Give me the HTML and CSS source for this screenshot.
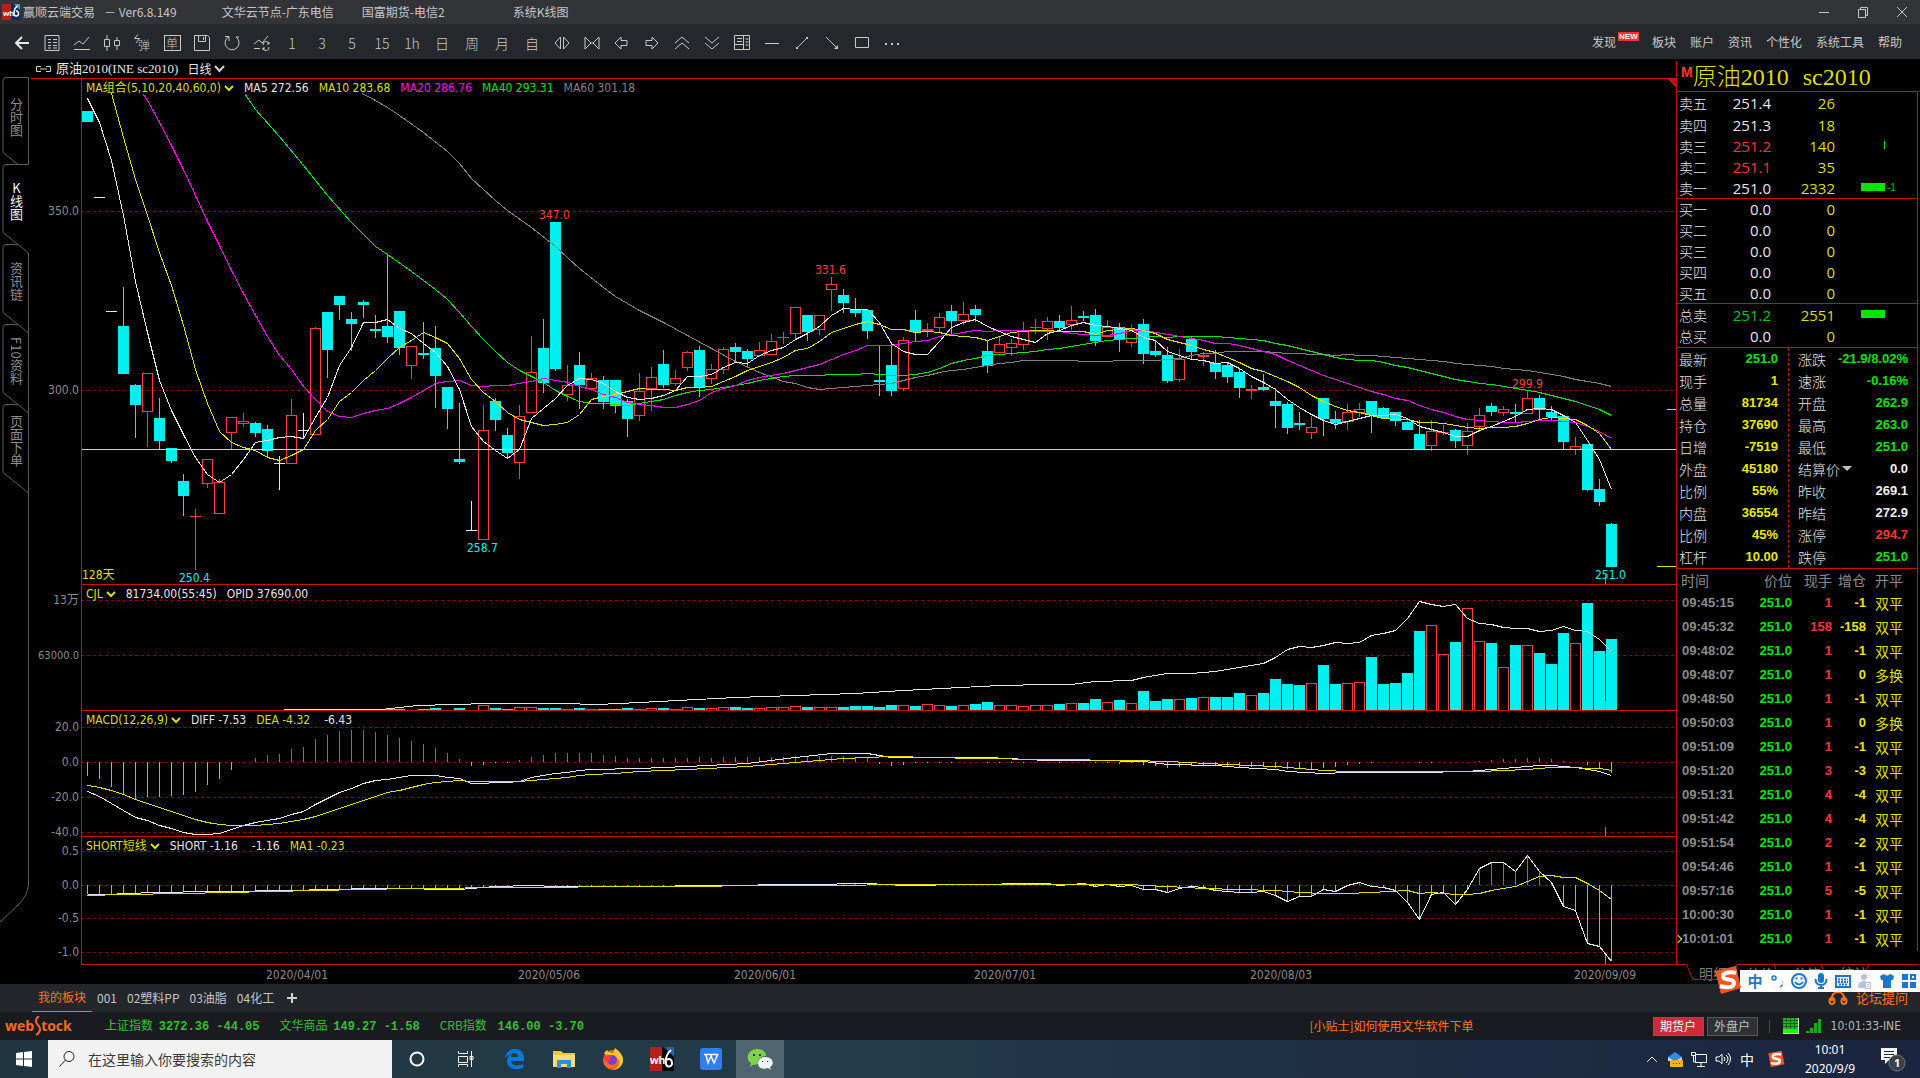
FILE: index.html
```html
<!DOCTYPE html>
<html lang="zh-CN">
<head>
<meta charset="utf-8">
<title>赢顺云端交易 - Ver6.8.149</title>
<link rel="stylesheet" href="styles.css">
</head>
<body>
<header class="titlebar">
  <svg class="app-logo" width="18" height="16" viewBox="0 0 18 16"><rect width="9" height="16" fill="#b3201d"/><rect x="9" width="9" height="16" fill="#0d2c63"/><path d="M12 0h6v6z" fill="#3d9be0"/><text x="1" y="12" class="logo-wh">wh</text><path d="M16 2c-3 1-4 5-4 8a2.300 2.500 0 1 0 2-3" fill="none" stroke="#fff" stroke-width="1.500"/></svg>
  <span class="t-name">赢顺云端交易</span><span class="t-ver">－ Ver6.8.149</span>
  <span class="t-node">文华云节点-广东电信</span><span class="t-broker">国富期货-电信2</span><span class="t-view">系统K线图</span>
  <div class="win-controls">
    <button aria-label="最小化"><svg width="12" height="12"><path d="M1 6.500h10"/></svg></button>
    <button aria-label="还原"><svg width="12" height="12"><path d="M1.500 3.500h7v8h-7zM3.500 3V1.500h7v8H9"/></svg></button>
    <button aria-label="关闭"><svg width="12" height="12"><path d="M1 1l10 10M11 1L1 11"/></svg></button>
  </div>
</header>

<nav class="toolbar">
  <div class="tools">
    <button aria-label="返回"><svg width="16" height="16"><path d="M2 8h13M8 2L2 8l6 6" class="bold"/></svg></button>
    <button aria-label="列表"><svg width="16" height="16"><path d="M1 .5h14v15H1zM4 4.500h3M9 4.500h4M4 7.500h3M9 7.500h4M4 10.500h3M9 10.500h4M4 13h3M9 13h4"/></svg></button>
    <button aria-label="分时"><svg width="18" height="16"><path d="M1 10l5-4 4 3 6-7M1 14.500h16"/></svg></button>
    <button aria-label="K线"><svg width="18" height="16"><path d="M1.500 4.500h5v7h-5zM4 0v4M4 12v4M11.500 5.500h5v5h-5zM14 2v3M14 11v4"/></svg></button>
    <button class="flash"><svg width="8" height="10"><path d="M5 .5L1.500 4.500h5L3 9"/></svg>弹</button>
    <button class="boxed"><span>单</span></button>
    <button aria-label="保存"><svg width="17" height="16"><path d="M.5.500h13l2 2v13H.5zM4.500.500v6h7v-6M9.500 2v3"/></svg></button>
    <button aria-label="刷新"><svg width="17" height="16"><path d="M5 1.500A7 7 0 1 0 12 2M5 6V1.500H1M12 2h3"/></svg></button>
    <button aria-label="切换"><svg width="18" height="16"><path d="M1 9l5-4 3 3 6-7M1 13.500h6M10 10a3 3 0 0 1 6-1M16 12a3 3 0 0 1-6 1M16 7v2h-2M10 15v-2h2"/></svg></button>
    <button>1</button><button>3</button><button>5</button><button>15</button><button>1h</button>
    <button>日</button><button>周</button><button>月</button><button>自</button>
    <button aria-label="放宽"><svg width="16" height="14"><path d="M6.500 1v12L1 7zM9.500 1v12L15 7z"/></svg></button>
    <button aria-label="缩窄"><svg width="16" height="14"><path d="M1 1v12l6-6zM15 1v12L9 7zM7 7h2"/></svg></button>
    <button aria-label="左移"><svg width="16" height="14"><path d="M7 1L1 7l6 6V9.500h6v-5H7z"/></svg></button>
    <button aria-label="右移"><svg width="16" height="14"><path d="M8 1l6 6-6 6V9.500H2v-5h6z"/></svg></button>
    <button aria-label="放大"><svg width="16" height="14"><path d="M1 7l7-6 7 6M1 13l7-6 7 6"/></svg></button>
    <button aria-label="缩小"><svg width="16" height="14"><path d="M1 1l7 6 7-6M1 7l7 6 7-6"/></svg></button>
    <button aria-label="盘口"><svg width="16" height="16"><path d="M.5.500h15v14H.5zM9.500.500v14M.5 9.500h9M3 3.500h5M3 6.500h5M11.500 4h3M11.500 7h3M11.500 10h3"/></svg></button>
    <button aria-label="水平线"><svg width="16" height="14"><path d="M1 7.500h14"/></svg></button>
    <button aria-label="线段"><svg width="14" height="14"><path d="M2 12L12 2"/><path d="M1 11h2v2H1zM11 1h2v2h-2z" class="fill"/></svg></button>
    <button aria-label="箭头"><svg width="14" height="14"><path d="M1 1l11 11"/><path d="M13 9v4H9z" class="fill"/></svg></button>
    <button aria-label="矩形"><svg width="14" height="12"><path d="M.5.500h13v10H.5z"/></svg></button>
    <button aria-label="更多"><svg width="16" height="12"><path d="M1 6h2v2H1zM7 6h2v2H7zM13 6h2v2h-2z" class="fill"/></svg></button>
  </div>
  <div class="menus">
    <a href="#">发现<b class="new">NEW</b></a><a href="#" class="after-new">板块</a><a href="#">账户</a><a href="#">资讯</a><a href="#">个性化</a><a href="#">系统工具</a><a href="#">帮助</a>
  </div>
</nav>

<main class="workspace">
  <aside class="rail">
    <svg class="rail-lines" width="29" height="870">
      <path d="M28.500 18.500H6q-3 0-3 3v72l15 12h10.500zM28.500 105.500H6q-3 0-3 3v65l25.500 20.500M18 185.500H6q-3 0-3 3v65l25.500 20.500M18 265.500H6q-3 0-3 3v65l25.500 20.500M18 345.500H6q-3 0-3 3v65l25.500 20.500M28.500 194v632q-1 11-10.500 20L0 863"/>
    </svg>
    <button class="first">分时图</button>
    <button class="active">K线图</button>
    <button>资讯链</button>
    <button>F10资料</button>
    <button>页面下单</button>
  </aside>

  <section class="charts">
    <div class="chart-head">
      <svg width="17" height="8"><path d="M6 1.500H1.500v5H6M11 1.500h4.500v5H11M5 4h7"/></svg>
      <span class="contract">原油2010(INE sc2010)</span>
      <button class="period">日线<svg width="11" height="8"><path d="M1 1l4.500 5L10 1"/></svg></button>
    </div>
    <div class="pane pane-main">
      <svg id="main"></svg>
      <div class="legend"><button class="yellow">MA组合(5,10,20,40,60,0)<svg width="10" height="7"><path d="M1 1l4 4 4-4"/></svg></button><span class="white">MA5 272.56</span><span class="yellow">MA10 283.68</span><span class="magenta">MA20 286.76</span><span class="green">MA40 293.31</span><span class="gray">MA60 301.18</span></div>
    </div>
    <div class="pane pane-sub">
      <svg id="vol"></svg>
      <div class="legend"><button class="yellow">CJL<svg width="10" height="7"><path d="M1 1l4 4 4-4"/></svg></button><span class="white">81734.00(55:45)</span><span class="white">OPID 37690.00</span></div>
    </div>
    <div class="pane pane-sub">
      <svg id="macd"></svg>
      <div class="legend"><button class="yellow">MACD(12,26,9)<svg width="10" height="7"><path d="M1 1l4 4 4-4"/></svg></button><span class="white">DIFF -7.53</span><span class="yellow">DEA -4.32</span><span class="white wide">-6.43</span></div>
    </div>
    <div class="pane pane-last">
      <svg id="short"></svg>
      <div class="legend"><button class="yellow">SHORT短线<svg width="10" height="7"><path d="M1 1l4 4 4-4"/></svg></button><span class="white">SHORT -1.16</span><span class="white wide">-1.16</span><span class="yellow">MA1 -0.23</span></div>
    </div>
    <svg id="dates" class="dates"></svg>
  </section>

  <aside class="quote">
    <div class="quote-body">
      <h1><sup>M</sup><span>原油2010</span><span>sc2010</span></h1>
      <table class="book">
        <tbody class="asks">
          <tr><th>卖五</th><td class="white">251.4</td><td>26</td><td class="bar"></td></tr>
          <tr><th>卖四</th><td class="white">251.3</td><td>18</td><td class="bar"></td></tr>
          <tr><th>卖三</th><td class="red">251.2</td><td>140</td><td class="bar"><i class="tick"></i></td></tr>
          <tr><th>卖二</th><td class="red">251.1</td><td>35</td><td class="bar"></td></tr>
          <tr><th>卖一</th><td class="white">251.0</td><td>2332</td><td class="bar"><i></i><small>-1</small></td></tr>
        </tbody>
        <tbody>
          <tr><th>买一</th><td class="white">0.0</td><td>0</td><td class="bar"></td></tr>
          <tr><th>买二</th><td class="white">0.0</td><td>0</td><td class="bar"></td></tr>
          <tr><th>买三</th><td class="white">0.0</td><td>0</td><td class="bar"></td></tr>
          <tr><th>买四</th><td class="white">0.0</td><td>0</td><td class="bar"></td></tr>
          <tr><th>买五</th><td class="white">0.0</td><td>0</td><td class="bar"></td></tr>
        </tbody>
        <tbody class="totals">
          <tr><th>总卖</th><td class="dgreen">251.2</td><td>2551</td><td class="bar"><i></i></td></tr>
          <tr><th>总买</th><td class="white">0.0</td><td>0</td><td class="bar"></td></tr>
        </tbody>
      </table>
      <div class="info">
        <dl>
          <div><dt>最新</dt><dd class="green">251.0</dd></div>
          <div><dt>现手</dt><dd>1</dd></div>
          <div><dt>总量</dt><dd>81734</dd></div>
          <div><dt>持仓</dt><dd>37690</dd></div>
          <div><dt>日增</dt><dd>-7519</dd></div>
          <div><dt>外盘</dt><dd>45180</dd></div>
          <div><dt>比例</dt><dd>55%</dd></div>
          <div><dt>内盘</dt><dd>36554</dd></div>
          <div><dt>比例</dt><dd>45%</dd></div>
          <div><dt>杠杆</dt><dd>10.00</dd></div>
        </dl>
        <dl>
          <div><dt>涨跌</dt><dd class="green">-21.9/8.02%</dd></div>
          <div><dt>速涨</dt><dd class="green">-0.16%</dd></div>
          <div><dt>开盘</dt><dd class="green">262.9</dd></div>
          <div><dt>最高</dt><dd class="green">263.0</dd></div>
          <div><dt>最低</dt><dd class="green">251.0</dd></div>
          <div><dt>结算价<svg width="10" height="5"><path d="M0 0h10L5 5z"/></svg></dt><dd class="white">0.0</dd></div>
          <div><dt>昨收</dt><dd class="white">269.1</dd></div>
          <div><dt>昨结</dt><dd class="white">272.9</dd></div>
          <div><dt>涨停</dt><dd class="red">294.7</dd></div>
          <div><dt>跌停</dt><dd class="green">251.0</dd></div>
        </dl>
      </div>
      <table class="ticks">
        <thead><tr><th>时间</th><th>价位</th><th>现手</th><th>增仓</th><th>开平</th></tr></thead>
        <tbody>
          <tr><td>09:45:15</td><td>251.0</td><td>1</td><td>-1</td><td>双平</td></tr>
          <tr><td>09:45:32</td><td>251.0</td><td>158</td><td>-158</td><td>双平</td></tr>
          <tr><td>09:48:02</td><td>251.0</td><td>1</td><td>-1</td><td>双平</td></tr>
          <tr><td>09:48:07</td><td>251.0</td><td>1</td><td>0</td><td>多换</td></tr>
          <tr><td>09:48:50</td><td>251.0</td><td>1</td><td>-1</td><td>双平</td></tr>
          <tr><td>09:50:03</td><td>251.0</td><td>1</td><td>0</td><td>多换</td></tr>
          <tr><td>09:51:09</td><td>251.0</td><td>1</td><td>-1</td><td>双平</td></tr>
          <tr><td>09:51:20</td><td>251.0</td><td>3</td><td>-3</td><td>双平</td></tr>
          <tr><td>09:51:31</td><td>251.0</td><td>4</td><td>-4</td><td>双平</td></tr>
          <tr><td>09:51:42</td><td>251.0</td><td>4</td><td>-4</td><td>双平</td></tr>
          <tr><td>09:51:54</td><td>251.0</td><td>2</td><td>-2</td><td>双平</td></tr>
          <tr><td>09:54:46</td><td>251.0</td><td>1</td><td>-1</td><td>双平</td></tr>
          <tr><td>09:57:16</td><td>251.0</td><td>5</td><td>-5</td><td>双平</td></tr>
          <tr><td>10:00:30</td><td>251.0</td><td>1</td><td>-1</td><td>双平</td></tr>
          <tr class="latest"><td>10:01:01</td><td>251.0</td><td>1</td><td>-1</td><td>双平</td></tr>
        </tbody>
      </table>
    </div>
    <div class="quote-tabs">
      <svg width="244" height="17"><path d="M0 .5h10.500l6.500 15h38l6-15H242M98 .500l6 15M145 .500l6 15M193 .500l-4 8"/></svg>
      <button>明细</button><button>分价</button><button>分笔</button><button>统计</button>
    </div>
  </aside>
</main>

<nav class="groups">
  <a href="#" class="on">我的板块</a><a href="#">001</a><a href="#">02塑料PP</a><a href="#">03油脂</a><a href="#">04化工</a>
  <button aria-label="添加板块"><svg width="12" height="12"><path d="M6 1v10M1 6h10"/></svg></button>
  <a href="#" class="forum"><svg width="20" height="14"><path d="M4 10C3 4 6 1 10 1s7 3 6 9" /><ellipse cx="4" cy="10" rx="2.500" ry="3"/><ellipse cx="16" cy="10" rx="2.500" ry="3"/></svg>论坛提问</a>
</nav>

<footer class="status">
  <div class="brand">web<svg width="7" height="20" viewBox="0 0 7 20"><path d="M5 0C1 3 1 6 4 9s3 7-2 10" /></svg>tock</div>
  <div class="indices">
    <span>上证指数 <b>3272.36 -44.05</b></span>
    <span>文华商品 <b>149.27 -1.58</b></span>
    <span>CRB指数 <b class="far">146.00 -3.70</b></span>
  </div>
  <a href="#" class="tip">[小贴士]如何使用文华软件下单</a>
  <div class="right">
    <button class="acct hot">期货户</button><button class="acct">外盘户</button>
    <i class="sep"></i>
    <svg class="grid-icon" width="16" height="16"><rect width="16" height="16" fill="#d8f0d8"/><rect width="15" height="15" fill="#22b422"/><path d="M0 2.500h15M0 5.500h15M0 8.500h15M3.500 0v11M7.500 0v11M11.500 0v11" stroke="#0b6a0b"/><rect y="11" width="15" height="4" fill="#10ff10"/></svg>
    <svg width="16" height="16"><path d="M0 13h3v2H0zM4 10h3v5H4zM8 5h3v10H8zM12 1h3v14h-3z" fill="#18a818"/></svg>
    <time>10:01:33-INE</time>
  </div>
</footer>

<footer class="taskbar">
  <button class="start" aria-label="开始"><svg width="16" height="16" viewBox="0 0 16 16"><path d="M0 2l7-1v6.500H0zM8 .9L16 0v7.500H8zM0 8.500h7V15l-7-1zM8 8.500h8V16l-8-1z" fill="#fff"/></svg></button>
  <label class="search"><svg width="18" height="18"><circle cx="11" cy="6.500" r="5"/><path d="M7.500 10L1.500 16.500"/></svg><input type="text" placeholder="在这里输入你要搜索的内容" aria-label="搜索"></label>
  <div class="apps">
    <button aria-label="Cortana"><svg width="18" height="18"><circle cx="9" cy="9" r="6.500" fill="none" stroke="#fff" stroke-width="2"/></svg></button>
    <button aria-label="任务视图"><svg width="18" height="18"><path d="M1.500 1v2.500h9V1M1.500 6.500h9v6h-9zM1.500 17v-2.500h9V17M14.500 1v16M13 6.500h3v3h-3z" fill="none" stroke="#fff"/></svg></button>
    <button aria-label="Edge"><svg width="22" height="22" viewBox="0 0 22 22"><path d="M1 10C2 3 7 1 11 1c6 0 9 4 9 9v3H7c0 4 6 6 12 3v4c-7 3-16 1-16-7 0-4 3-7 6-8-2 1-2 3-2 4h7c0-5-6-6-13 1z" fill="#0a78d7"/></svg></button>
    <button aria-label="资源管理器"><svg width="22" height="20" viewBox="0 0 22 20"><path d="M0 2h8l2 2h12v14H0z" fill="#f5c244"/><path d="M0 6h22v12H0z" fill="#ffdc73"/><path d="M4 11h14v8h-4v-4H8v4H4z" fill="#2f8fdb"/></svg></button>
    <button aria-label="Firefox"><svg width="24" height="24" viewBox="0 0 24 24"><circle cx="12" cy="13" r="10" fill="#ff6a1f"/><path d="M3 7c1-3 3-4 3-4 1 2 3 3 6 3l2-5c4 3 9 8 8 13-1 6-6 9-11 9 6-1 8-6 7-9-2-5-8-6-15-7z" fill="#ffc62e"/><circle cx="11" cy="13" r="5" fill="#7b3fd0"/><path d="M3 9c4-2 7 0 8 2-3 0-3 2-2 4-4 1-7-2-6-6z" fill="#ff3b45"/></svg></button>
    <button aria-label="赢顺"><svg width="24" height="24" viewBox="0 0 24 24"><rect width="12" height="24" fill="#b3201d"/><rect x="12" width="12" height="24" fill="#05060c"/><path d="M14 0h10v10z" fill="#2b62a5"/><text x="0" y="17" class="task-wh">wh</text><path d="M21 3c-4 3-6 9-5 14 1 4 6 3 6-1s-3-5-5-3" fill="none" stroke="#fff" stroke-width="2"/></svg></button>
    <button aria-label="WPS"><svg width="22" height="22" viewBox="0 0 22 22"><rect width="22" height="22" rx="3" fill="#2f7ff0"/><path d="M4 6.500h14M6 7l2 8 3-7 3 7 4-9" fill="none" stroke="#fff" stroke-width="1.500"/></svg></button>
    <button class="current" aria-label="微信"><svg width="26" height="22" viewBox="0 0 26 22"><path d="M10 1c6 0 9 3 9 7-6 0-9 4-8 8l-5 1-3 2 1-4C-3 10 2 1 10 1z" fill="#7ed34a"/><path d="M18 9c8 0 10 7 5 10l1 3-3-2c-7 2-10-1-10-5 0-3 3-6 7-6z" fill="#eef3f3"/><path d="M6 6h2v2H6zM12 6h2v2h-2zM15 13h1v1h-1zM20 13h1v1h-1z" fill="#333"/></svg></button>
  </div>
  <div class="tray">
    <svg width="14" height="10"><path d="M2 8l5-5 5 5" class="line"/></svg>
    <svg width="16" height="16"><path d="M1 6l7-5 7 5-7 4z" fill="#2a8cf0"/><path d="M1 6l7 4 7-4v4H1z" fill="#bcdcff"/><rect x="3" y="9" width="13" height="7" rx="1" fill="#ffb020"/><path d="M6 12h1v1H6zM9 12h1v1H9zM12 12h1v1h-1z" fill="#333"/></svg>
    <svg width="16" height="16"><path d="M4.500 3.500h11v8h-11zM10 12v3M6 15.500h8M.5 1.500h4v3h-4zM2.500 5v6h2" class="line"/></svg>
    <svg width="16" height="16"><path d="M1 6h3l3-3v10l-3-3H1zM9 6q2 2 0 4M11 4q4 4 0 8M13 2q5 6 0 12" class="line"/></svg>
    <span>中</span>
    <svg class="sogou-s" width="18" height="18" viewBox="0 0 28 28"><path d="M2 5l21-4 4 21-21 5z" fill="#f2551f"/><path d="M22 7c-6-2-14 0-13 4s11 1 11 6-8 5-14 3" fill="none" stroke="#fff" stroke-width="4"/></svg>
    <div class="clock"><time>10:01</time><time>2020/9/9</time></div>
    <button class="notice" aria-label="通知"><svg width="26" height="26"><path d="M1 2h16v12H9l-4 4v-4H1z" fill="#fff"/><path d="M4 5.500h10M4 8.500h10M4 11.500h6" stroke="#222c45"/><circle cx="17" cy="17" r="8" fill="#3a4049" stroke="#6b7078"/></svg><b>1</b></button>
  </div>
</footer>

<div class="ime">
  <svg class="ime-logo" width="28" height="28" viewBox="0 0 28 28"><path d="M1 5l21-5 5 22-20 6z" fill="#f2551f"/><path d="M22 7c-6-2-14 0-13 4s11 1 11 6-8 5-14 3" fill="none" stroke="#fff" stroke-width="4"/></svg>
  <button>中</button>
  <button aria-label="标点"><svg width="16" height="16"><circle cx="5" cy="5" r="2" fill="none" stroke="#1b76d2" stroke-width="1.500"/><path d="M12 8a2 2 0 1 1-1 3.500h1q0 2-2 3 4 0 4-4 0-2-2-2.500z" fill="#1b76d2"/></svg></button>
  <button aria-label="表情"><svg width="16" height="16"><circle cx="8" cy="8" r="7" class="bl"/><path d="M4 9q4 5 8 0M5.500 4.500v2M10.500 4.500v2" class="bl"/></svg></button>
  <button aria-label="语音"><svg width="16" height="16"><rect x="5" y="0" width="6" height="10" rx="3" fill="#1b76d2"/><path d="M2.500 6q0 6 5.500 6t5.500-6M8 12v3M5 15h6" class="bl"/></svg></button>
  <button aria-label="键盘"><svg width="16" height="14"><rect x="1" y="2" width="14" height="11" class="bl"/><path d="M3 5.500h10M3 8h10M4 10.500h8" class="bl" stroke-dasharray="2 1"/></svg></button>
  <button aria-label="账号"><svg width="16" height="16"><circle cx="7" cy="4" r="3" fill="#b4c4d8"/><path d="M1 15q0-7 6-7 3 0 4 2v5z" fill="#b4c4d8"/><path d="M8.500 9.500h5v6h-5zM10 11.500h2M10 13.500h2" fill="#fff" stroke="#b4c4d8"/></svg></button>
  <button aria-label="皮肤"><svg width="16" height="16"><path d="M1 3l4-2q3 3 6 0l4 2-1 4h-2v8H4V7H2z" fill="#1b76d2"/></svg></button>
  <button aria-label="工具"><svg width="16" height="16"><path d="M1 1h6v6H1zM1 9h6v6H1zM9 9h6v6H9z" fill="#1b76d2"/><path d="M10 2h4v4h-4z" class="bl"/></svg></button>
</div>
<script src="chart.js"></script>
</body>
</html>
```

FILE: styles.css
```css
* { box-sizing: border-box; }
body {
  margin: 0;
  min-height: 100vh;
  display: flex;
  flex-direction: column;
  background: #000;
  color: #e6e6e6;
  font: 12px/16px "Noto Sans CJK SC", sans-serif;
  overflow-x: hidden;
}
button { background: none; border: 0; padding: 0; margin: 0; color: inherit; font: inherit; }
a { color: inherit; text-decoration: none; }
svg { display: block; flex: none; }

.white { color: #e6e6e6; }
.yellow { color: #dede00; }
.magenta { color: #ff00ff; }
.green { color: #00e600; }
.dgreen { color: #00c818; }
.red { color: #ff3232; }
.gray { color: #808080; }

/* title bar */
.titlebar { height: 24px; background: #323438; color: #c4c6c8; display: flex; align-items: center; padding-left: 2px; white-space: nowrap; }
.app-logo { margin-right: 3px; }
.logo-wh { font: bold 8px "Liberation Sans", sans-serif; fill: #fff; }
.t-ver { margin-left: 9px; }
.t-node { margin-left: 45px; }
.t-broker { margin-left: 28px; }
.t-view { margin-left: 68px; }
.win-controls { margin-left: auto; display: flex; gap: 27px; padding-right: 12px; }
.win-controls path { fill: none; stroke: #c8c8c8; }

/* toolbar */
.toolbar { height: 35px; background: #25282d; color: #c8c8c8; display: flex; align-items: center; justify-content: space-between; }
.tools { display: flex; padding: 2px 0 0 7px; }
.tools button { width: 30px; height: 24px; display: flex; align-items: center; justify-content: center; font-size: 14px; font-weight: 300; line-height: 20px; position: relative; }
.tools path { fill: none; stroke: #c8c8c8; }
.tools .bold { stroke-width: 2; stroke: #e6e6e6; }
.tools .fill { fill: #c8c8c8; stroke: none; }
.tools .flash { font-size: 12px; padding: 4px 0 0 4px; }
.flash svg { position: absolute; left: 6px; top: 3px; }
.boxed span { border: 1px solid #c8c8c8; width: 17px; height: 16px; font-size: 12px; line-height: 13px; }
.menus { display: flex; gap: 14px; padding-right: 18px; }
.menus a { position: relative; }
.menus .after-new { margin-left: 22px; }
.new { position: absolute; left: 26px; top: -2px; width: 21px; height: 9px; background: #ff3232; color: #fff; font: bold 8px/9px "Liberation Sans", sans-serif; text-align: center; }

/* workspace */
.workspace { flex: 1; display: flex; }
.rail { width: 29px; position: relative; display: flex; flex-direction: column; padding-top: 18px; overflow: hidden; }
.rail-lines { position: absolute; left: 0; top: 0; }
.rail-lines path { fill: none; stroke: #5a5a5a; }
.rail button { position: relative; height: 80px; width: 29px; padding: 0 0 6px 4px; writing-mode: vertical-rl; color: #8c8c8c; font-size: 13px; line-height: 25px; }
.rail .first { height: 87px; }
.rail .active { color: #f6f6f6; text-orientation: upright; }

.charts { flex: 1; min-width: 0; display: flex; flex-direction: column; }
.chart-head { height: 19px; display: flex; align-items: center; padding-left: 6px; }
.chart-head path { fill: none; stroke: #d0d0d0; }
.chart-head .period path { stroke-width: 2; }
.contract { margin-left: 4px; font-family: "Liberation Serif", "Noto Sans CJK SC", serif; font-size: 13px; }
.period { margin-left: 9px; display: flex; align-items: center; gap: 3px; }
.pane { position: relative; min-height: 0; }
.pane-main { flex: 506 1 0; }
.pane-sub { flex: 126 1 0; }
.pane-last { flex: 129 1 0; }
.pane > svg { position: absolute; width: 100%; height: 100%; }
.dates { width: 100%; height: 19px; }
.charts text { font: 12px "DejaVu Sans Condensed", "Noto Sans CJK SC", sans-serif; }
.charts text.long { font-size: 11px; }
.legend { position: absolute; left: 57px; top: 3px; display: flex; gap: 10px; font: 12px/14px "DejaVu Sans Condensed", "Noto Sans CJK SC", sans-serif; white-space: nowrap; }
.legend button { display: flex; align-items: center; gap: 3px; }
.legend path { fill: none; stroke: #dede00; stroke-width: 2; }
.wide { margin-left: 4px; }

/* quote panel */
.quote { width: 244px; display: flex; flex-direction: column; padding: 2px 2px 3px 0; }
.quote-body { flex: 1; border-left: 1px solid #c0150c; }
.quote h1 { margin: 0; height: 30px; display: flex; align-items: center; gap: 14px; font: 24px/30px "Liberation Serif", "Noto Sans CJK SC", serif; color: #dede00; padding: 2px 0 0 4px; font-weight: 300; }
.quote sup { color: #ff3232; font: bold 14px/14px "Liberation Sans", sans-serif; align-self: flex-start; margin-right: -14px; padding-top: 2px; }
table { border-collapse: collapse; border-spacing: 0; width: 100%; table-layout: fixed; }
.book { border-right: 1px solid #c0150c; }
.book tbody { border-top: 1px solid #c0150c; }
.book tr { height: 21px; }
.book .asks tr:first-child { height: 23px; }
.book .totals tr:first-child { height: 22px; }
.book th { width: 50px; padding: 0 0 0 2px; font: 14px/20px "Noto Sans CJK SC", sans-serif; font-weight: 300; text-align: left; }
.book td { padding: 0; font: 15px/20px "Open Sans", sans-serif; text-align: right; color: #dede00; width: 44px; }
.book td:nth-child(3) { width: 64px; }
.book td.white { color: #e6e6e6; }
.book td.red { color: #ff3232; }
.book td.dgreen { color: #00c818; }
.book td.bar { width: auto; text-align: left; padding-left: 26px; white-space: nowrap; }
.bar i { display: inline-block; width: 24px; height: 8px; background: #00e600; vertical-align: 3px; }
.bar .tick { width: 1px; margin-left: 23px; }
.bar small { font: 10px/8px "Liberation Sans", sans-serif; color: #00c800; margin-left: 2px; vertical-align: 3px; }
.info { display: flex; border: solid #c0150c; border-width: 1px 1px 1px 0; }
.info dl { margin: 0; flex: 129; padding-right: 9px; }
.info dl:first-child { flex: 0 0 112px; padding-right: 10px; border-right: 1px dashed #c0150c; }
.info div { display: flex; justify-content: space-between; align-items: center; height: 22px; padding-left: 2px; white-space: nowrap; }
.info dl + dl div { padding-left: 9px; }
.info dt { font-size: 14px; font-weight: 300; line-height: 20px; display: flex; align-items: center; gap: 2px; }
.info dt path { fill: #c0c0c0; }
.info dd { margin: 0; font: bold 13px/20px "Liberation Sans", sans-serif; color: #eaea00; }
.info dd.green { color: #00e600; }
.info dd.white { color: #f0f0f0; }
.info dd.red { color: #ff3232; }
.ticks { border-right: 1px solid #c0150c; }
.ticks th { height: 22px; padding: 0; font: 14px/20px "Noto Sans CJK SC", sans-serif; color: #8c8c8c; text-align: right; }
.ticks th:nth-child(1) { width: 60px; text-align: left; padding-left: 4px; }
.ticks th:nth-child(2) { width: 55px; }
.ticks th:nth-child(3) { width: 40px; }
.ticks th:nth-child(4) { width: 34px; }
.ticks th:nth-child(5) { text-align: left; padding-left: 9px; }
.ticks td { height: 24px; padding: 0; font: bold 13px/20px "Liberation Sans", sans-serif; text-align: right; }
.ticks td:nth-child(1) { color: #8c8c8c; text-align: left; padding-left: 5px; position: relative; }
.ticks td:nth-child(2) { color: #00e600; }
.ticks td:nth-child(3) { color: #ff3232; }
.ticks td:nth-child(4) { color: #eaea00; }
.ticks td:nth-child(5) { color: #dede00; font: 14px/20px "Noto Sans CJK SC", sans-serif; text-align: left; padding-left: 9px; }
.latest td:first-child::before { content: ""; position: absolute; left: -2px; top: 9px; width: 5px; height: 5px; border: solid #eaea00; border-width: 1px 1px 0 0; transform: rotate(45deg); }
.quote-tabs { position: relative; height: 17px; display: flex; gap: 19px; padding-left: 23px; color: #7d7d7d; font-size: 14px; line-height: 16px; }
.quote-tabs svg { position: absolute; left: 0; top: 0; }
.quote-tabs path { fill: none; stroke: #c0150c; }

/* board groups */
.groups { height: 28px; background: #23262b; color: #c4c6c8; display: flex; align-items: center; gap: 10px; padding-left: 32px; line-height: 26px; }
.groups .on { color: #ff7418; border-bottom: 1px solid #ff7418; height: 28px; padding: 0 6px; margin-right: -5px; }
.groups button path { stroke: #d0d0d0; stroke-width: 2; }
.groups button { margin-left: 2px; }
.groups .forum { margin-left: auto; padding-right: 12px; display: flex; align-items: center; gap: 8px; color: #ff7418; font-size: 13px; }
.forum path, .forum ellipse { fill: none; stroke: #ff7418; stroke-width: 2; }

/* status bar */
.status { height: 28px; background: #1a1b20; display: flex; align-items: center; position: relative; padding-left: 5px; white-space: nowrap; }
.brand { width: 100px; display: flex; align-items: center; color: #f26a1b; font: bold 14px/20px "Open Sans", sans-serif; }
.brand path { fill: none; stroke: #f26a1b; stroke-width: 2; }
.indices { display: flex; gap: 20px; color: #2fc02f; }
.indices b { font: bold 12px/16px "Liberation Mono", monospace; margin-left: 3px; }
.indices .far { margin-left: 8px; }
.tip { color: #ff7418; margin-left: auto; }
.right { display: flex; align-items: center; gap: 3px; padding-right: 19px; margin-left: 179px; }
.acct { width: 51px; height: 19px; border: 1px solid #55585c; background: #2e3136; color: #c0c2c4; line-height: 16px; }
.acct.hot { background: #cf2a38; border-color: #a8464e; color: #fff; }
.sep { width: 1px; height: 13px; background: #e60000; margin: 0 10px 0 8px; }
.right .grid-icon { margin-right: 4px; }
.right time { font: 12px/16px "DejaVu Sans Condensed", sans-serif; color: #b4b8be; margin-left: 6px; }

/* taskbar */
.taskbar { height: 38px; display: flex; align-items: center; background: linear-gradient(90deg, #20343f, #233c4b 45%, #1e3046 65%, #1b2540); color: #fff; }
.start { width: 48px; height: 38px; display: flex; align-items: center; justify-content: center; }
.search { width: 344px; height: 38px; background: #f2f2f2; display: flex; align-items: center; padding-left: 10px; gap: 12px; }
.search circle, .search path { fill: none; stroke: #222; }
.search input { flex: 1; min-width: 0; border: 0; background: none; padding: 0; font: 14px/20px "Noto Sans CJK SC", sans-serif; }
.search input::placeholder { color: #3a3a3a; opacity: 1; }
.apps { display: flex; gap: 1px; padding-left: 1px; }
.apps button { width: 48px; height: 38px; display: flex; align-items: center; justify-content: center; }
.apps .current { background: #4f6670; }
.task-wh { font: bold 11px "Liberation Sans", sans-serif; fill: #fff; }
.tray { margin-left: auto; display: flex; align-items: center; gap: 8px; padding-right: 14px; }
.tray .line { fill: none; stroke: #fff; }
.tray span { font-size: 14px; margin: 0 5px 0 1px; }
.clock { width: 74px; display: flex; flex-direction: column; align-items: center; font: 12px/19px "Noto Sans", sans-serif; }
.notice { position: relative; margin-left: 5px; }
.notice b { position: absolute; left: 14px; top: 9px; font: bold 11px/16px "Noto Sans", sans-serif; color: #fff; }

/* floating input-method bar */
.ime { position: absolute; right: 0; bottom: 86px; height: 22px; width: 180px; background: #fff; display: flex; align-items: center; justify-content: flex-end; }
.ime-logo { position: absolute; left: -26px; top: -4px; }
.ime button { width: 22px; height: 22px; display: flex; align-items: center; justify-content: center; color: #1b76d2; font-size: 15px; font-weight: bold; }
.ime .bl { fill: none; stroke: #1b76d2; stroke-width: 2; }
```

FILE: chart.js
```js
// One entry per trading day: kind, high, body top, body bottom, low.
// c = falling, r = rising, f = thin rising, x = rising doji, w = flat.
const DAYS = `c 111 111 122 122|w 197 197 197 197|w 311 311 311 311|c 287 326 374 374|c 384 385 405 438|r 373 373 411 447|c 398 418 441 450|c 448 448 461 463|c 474 481 496 516|x 509 516 516 570|r 459 459 483 488|r 479 482 513 513|r 417 417 432 449|r 413 421 423 427|c 422 423 433 437|c 425 429 451 457|w 456 463 463 490|r 399 415 463 463|w 413 430 430 438|r 327 328 434 434
c 312 312 350 378|c 296 296 305 320|c 312 319 324 351|c 300 302 305 318|c 315 329 331 338|c 254 326 337 343|c 311 311 348 355|r 346 346 365 379|c 322 353 355 359|c 326 348 376 408|c 387 387 409 429|c 403 459 462 464|w 501 530 530 530|r 405 430 539 539|c 398 401 420 431|c 428 435 453 458|r 405 416 462 479|r 336 372 412 412|c 319 348 383 393|c 222 222 369 371
r 365 385 394 401|c 352 365 385 409|r 373 378 388 390|c 376 380 402 409|c 380 380 406 413|c 399 401 419 437|r 373 391 415 421|r 367 377 388 411|c 350 364 385 388|r 370 378 383 386|r 351 352 367 371|c 346 350 388 397|r 364 369 378 384|r 347 349 369 374|c 343 347 352 363|c 349 351 359 367|r 342 350 355 357|r 334 341 354 355|x 332 337 337 344|r 307 307 333 339
c 315 315 332 341|r 315 315 329 335|r 277 284 289 311|c 289 295 303 313|c 298 309 313 317|c 309 310 331 339|c 345 380 382 396|c 342 365 391 396|r 337 340 388 391|c 310 320 332 341|f 323 329 331 337|r 313 317 327 332|c 305 311 321 335|r 302 314 320 325|c 305 309 315 322|c 341 351 366 373|r 337 344 352 353|r 339 343 347 356|r 322 331 344 350|x 319 327 327 334
r 317 321 328 340|c 315 321 328 332|r 306 320 324 330|c 311 316 318 321|c 309 315 341 346|r 320 327 336 336|c 323 327 339 352|r 325 329 342 347|c 319 324 354 364|c 340 351 355 357|c 347 355 381 383|r 349 359 379 382|c 337 339 352 359|f 352 355 357 366|c 350 363 372 379|c 363 365 377 383|c 368 372 388 398|f 385 389 391 399|c 374 387 390 391|c 388 401 406 428
c 402 404 428 434|c 412 423 425 430|r 416 427 432 439|c 398 398 419 436|c 411 419 423 429|r 404 412 421 430|r 403 409 412 417|c 401 401 415 433|c 407 408 418 419|c 412 412 421 426|c 421 422 430 430|c 420 434 449 449|r 420 431 445 451|x 425 432 432 435|c 429 430 441 448|r 423 431 445 455|r 408 415 426 432|c 403 406 412 416|r 406 409 412 416|c 404 412 414 422
r 391 398 413 413|c 395 398 410 419|c 406 412 417 420|c 415 416 442 449|r 437 446 449 455|c 444 444 490 491|c 479 489 502 506|c 523 524 567 567`
  .split(/[|\n]/).map(s => { const [k, ...v] = s.trim().split(' '); return [k, ...v.map(Number)]; });

// Averages that need days before the first bar start from these points.
const MA = [
  { n: 60, color: '#808080', start: [22.9,93,24,100,25,107,26,115,28,132,30,151,31,163,32,178,34,200,35,210,37,227,39,246,41,268,43,287,44,296,46,310,48,322,50,335,52,348,54,361,56,372,58,381] },
  { n: 40, color: '#00e600', start: [13.1,93,14,109,16,136,18,165,20,195,22,222,24,246,25,254,27,271,29,289,30,299,31,312,32,326,33,339,34,351,35,362,36,370,37,376,38,382] },
  { n: 20, color: '#ff00ff', start: [4.6,93,5,100,6,122,7,145,8,169,9,195,10,221,11,245,12,270,13,293,14,315,15,336,16,355,17,369,18,386] },
  { n: 10, color: '#dede00', start: [2,93,3,137,4,179,5,215,6,252,7,285,8,325] },
  { n: 5, color: '#e6e6e6', start: [0,98,1,122,2,160,3,215] }
];

const VOL = [
  ...Array(25).fill(0), 1,1,0,1,2,0,2,0,5,2,1,3,3,2,2,1,2,1,1,1,2,1,
  2,2,1,3,2,2,3,3,2,2,3,3,4,3,3,3,3,4,4,3,5,5,4,6,5,4,5,6,8,5,5,4,5,
  5,6,7,7,11,8,10,7,19,9,11,11,12,13,13,13,17,15,17,31,26,25,27,45,26,27,28,53,26,27,37,79,85,56,68,102,69,67,43,65,65,57,46,77,67,107,59,71];
const OPEN_INT = [16.4,709,24.500,709,27.500,705,30.500,704,33.500,703,39.500,703,42.500,704,46,702,54,697,64,693,68,690,76,685,80,684,82,684,84,681,87,680,88,677,90,673,92,673,94,671,96,667,98,663,99,657,100,649,101,646,102,647,103,645,104,642,105,643,106,642,107,635,108,633,109,630,110,618,111,601,112,604,113,606,114,604,115,618,116,623,117,624,118,627,119,628,120,628,121,631,122,630,123,626,124,630,125,631,126,639,127,651];

const HIST = [14,17,25,32,38,35,35,34,33,30,23,17,8,0,-4,-7,-8,-13,-15,-23,-27,-31,-32,-32,-30,-27,-24,-21,-18,-14,-9,-3,4,3,1,1,-2,-5,-7,-9,-9,-9,-9,-7,-6,-4,-4,
  -4,-4,-4,-4,-5,-4,-5,-5,-5,-5,-5,-5,-6,-6,-6,-6,-6,-5,-4,2,4,3,1,1,1,1,0,0,1,1,1,1,0,
  0,1,0,0,1,1,2,1,3,4,6,5,4,4,4,5,5,5,5,6,7,7,8,6,5,3,2,1,0,0,0,1,1,0,0,0,-1,-2,-3,-3,-4,-4,-3,-1,0,3,7,11];
const DIFF = [0,791,1,796,2,803,3,810,4,817,5,820,6,825,7,828,8,832,9,834,10,834,11,833,12,829,13,825,14,822,15,820,16,818,17,814,18,811,19,804,20,798,21,792,22,788,23,783,24,780,25,779,26,777,27,775,29,775,30,777,31,778,32,783,33,783,34,782,35,782,36,781,37,777,38,775,39,773,40,772,41,770,42,769,46,768,50,766,55,763,59,757,62,753,65,753,67,757,75,757,80,760,84,760,88,761,90,764,94,765,96,767,99,769,100,771,103,773,105,772,111,772,115,771,117,769,119,767,121,765,122,765,124,767,125,769,126,771,127,775];
const DEA = [0,785,1,787,2,790,3,794,4,799,5,803,6,807,7,811,8,815,9,819,10,822,11,824,12,825,14,825,15,824,16,823,17,821,18,819,19,816,20,812,21,808,22,804,23,800,24,796,25,792,26,790,27,787,28,784,29,782,30,781,31,780,32,781,36,781,37,780,38,779,39,778,40,777,41,775,42,774,44,773,46,771,50,769,55,766,59,762,63,758,67,756,74,758,80,759,87,760,90,761,95,764,99,766,101,768,103,770,105,771,116,771,118,770,120,769,122,767,124,767,125,768,126,768,127,770];
const SHORT = [0,894,2,894,3,893,6,892,10,891,18,890,19,889,25,888,31,889,32,888,33,887,34,886,37,885,39,886,46,886,52,885,60,884,65,883,68,885,79,883,80,883,81,885,83,883,84,886,85,884,86,886,87,885,88,889,89,889,90,892,91,888,92,886,93,887,94,890,95,891,96,892,97,892,98,891,99,895,100,901,101,896,102,896,103,889,104,891,105,885,106,882,107,886,108,887,109,890,110,902,111,919,112,894,113,892,114,904,115,889,116,868,117,862,118,862,119,871,120,855,121,871,122,882,123,906,124,910,125,943,126,946,127,961];
const SHORT_MA = [0,895,3,894,8,893,19,890,27,888,36,887,46,886,60,885,70,884,87,884,88,885,90,886,93,888,96,889,99,890,101,892,103,893,105,893,107,892,110,890,111,893,112,892,114,894,115,894,116,893,117,890,118,888,119,886,120,881,121,876,122,875,123,877,124,877,125,883,126,890,127,899];

const RED = '#ff3c3c', CYAN = '#00f0f0', WHITE = '#e6e6e6', YELLOW = '#dede00', FRAME = '#c0150c', GRAY = '#8a8a8a';
const LEFT = 52, STEP = 12, FIRST = 58;
const xOf = i => FIRST + i * STEP;

function pane(id, top, span) {
  const svg = document.getElementById(id);
  const k = svg.clientHeight / span, w = svg.clientWidth, out = [];
  const y = v => Math.round((v - top) * k);
  const api = {
    w, y, out,
    rect(x, a, width, b, color) { out.push(`<rect x="${x}" y="${y(a)}" width="${width}" height="${Math.max(1, y(b) - y(a))}" fill="${color}"/>`); },
    box(x, a, width, b, color) { out.push(`<rect x="${x + .5}" y="${y(a) + .5}" width="${width - 1}" height="${Math.max(1, y(b) - y(a))}" fill="none" stroke="${color}"/>`); },
    line(pts, color) {
      let s = '';
      for (let j = 0; j < pts.length; j += 2) s += `${xOf(pts[j]) + .5},${y(pts[j + 1]) + .5} `;
      out.push(`<polyline points="${s}" fill="none" stroke="${color}"/>`);
    },
    text(x, v, s, color, anchor) { out.push(`<text x="${x}" y="${y(v)}" fill="${color}" text-anchor="${anchor || 'start'}"${s.length > 6 ? ' class="long"' : ''}>${s}</text>`); },
    grid(v, label) {
      out.push(`<path d="M${LEFT} ${y(v) + .5}H${w}" stroke="#960000" stroke-dasharray="3 3"/>`);
      api.text(50, v + 4, label, GRAY, 'end');
    },
    frame(from) { out.push(`<path d="M${from} .5H${w}M${LEFT + .5} 0V${svg.clientHeight}" stroke="${FRAME}" fill="none"/>`); },
    marker(v) { out.push(`<rect x="1576" y="${y(v) - 9}" width="1" height="9" fill="${GRAY}"/>`); },
    done() { svg.innerHTML = `<g shape-rendering="crispEdges">${out.join('')}</g>`; }
  };
  return api;
}

function valueAt(pts, i) {
  for (let j = 2; j < pts.length; j += 2)
    if (pts[j] >= i) return pts[j - 1] + (pts[j + 1] - pts[j - 1]) * (i - pts[j - 2]) / (pts[j] - pts[j - 2]);
  return pts[pts.length - 1];
}

function draw() {
  const m = pane('main', 78, 506);
  m.grid(211, '350.0'); m.grid(390, '300.0');
  DAYS.forEach(([k, hi, a, b, lo], i) => {
    const x = xOf(i), c = k === 'c' ? CYAN : k === 'w' ? WHITE : RED;
    if (k === 'r') {
      if (hi < a) m.rect(x, hi, 1, a, c);
      if (lo > b) m.rect(x, b, 1, lo, c);
      m.box(x - 5, a, 11, b, c);
    } else {
      if (lo > hi) m.rect(x, hi, 1, lo, c);
      m.rect(x - 5, a, 11, b, c);
    }
  });
  const close = DAYS.map(([k, , a, b]) => k === 'c' ? b - 1 : a);
  MA.forEach(({ n, color, start }) => {
    const pts = start.slice();
    for (let i = n - 1; i < close.length; i++)
      pts.push(i, close.slice(i - n + 1, i + 1).reduce((s, v) => s + v) / n);
    m.line(pts, color);
  });
  m.out.push(`<path d="M${LEFT} ${m.y(449) + .5}H${m.w}" stroke="#d0d0c8"/>`);
  m.out.push(`<path d="M${m.w - 9} ${m.y(409) + .5}h9M${m.w - 19} ${m.y(566) + .5}h19" stroke="${YELLOW}"/>`);
  m.text(510, 219, '347.0', RED); m.text(786, 274, '331.6', RED); m.text(1483, 388, '299.9', RED);
  m.text(438, 552, '258.7', CYAN); m.text(150, 582, '250.4', CYAN); m.text(1566, 579, '251.0', CYAN);
  m.text(53, 579, '128天', YELLOW);
  m.marker(584);
  m.frame(2);
  m.out.push(`<path d="M${m.w - 10} 0h10v10z" fill="${FRAME}"/>`);
  m.done();

  const v = pane('vol', 584, 126);
  v.grid(600, '13万'); v.grid(655, '63000.0');
  VOL.forEach((h, i) => {
    if (!h) return;
    if (DAYS[i][0] === 'c') v.rect(xOf(i) - 5, 710 - h, 11, 710, CYAN);
    else v.box(xOf(i) - 5, 710 - h, 11, 710, RED);
  });
  v.line(OPEN_INT, WHITE); v.marker(710); v.frame(LEFT); v.done();

  const d = pane('macd', 710, 126);
  d.grid(727, '20.0'); d.grid(762, '0.0'); d.grid(797, '-20.0'); d.grid(832, '-40.0');
  HIST.forEach((h, i) => {
    if (h > 0) d.rect(xOf(i), 762, 1, 762 + h, CYAN);
    if (h < 0) d.rect(xOf(i), 762 + h, 1, 762, RED);
  });
  d.line(DIFF, WHITE); d.line(DEA, YELLOW); d.marker(836); d.frame(LEFT); d.done();

  const s = pane('short', 836, 129);
  s.grid(851, '0.5'); s.grid(885, '0.0'); s.grid(918, '-0.5'); s.grid(952, '-1.0');
  for (let i = 0; i < 128; i++) {
    const e = valueAt(SHORT, i);
    if (e > 885.5) s.rect(xOf(i), 885, 1, e, CYAN);
    if (e < 884.5) s.rect(xOf(i), e, 1, 885, RED);
  }
  s.line(SHORT, WHITE); s.line(SHORT_MA, YELLOW); s.marker(964); s.frame(LEFT);
  s.out.push(`<path d="M${LEFT} ${s.y(964) + .5}H${s.w}" stroke="${FRAME}"/>`);
  s.done();

  document.getElementById('dates').innerHTML =
    [[268, '2020/04/01'], [520, '2020/05/06'], [736, '2020/06/01'], [976, '2020/07/01'], [1252, '2020/08/03'], [1576, '2020/09/09']]
      .map(([x, t]) => `<text x="${x}" y="14" fill="${GRAY}" text-anchor="middle">${t}</text>`).join('');
}
draw();
addEventListener('resize', draw);
```
